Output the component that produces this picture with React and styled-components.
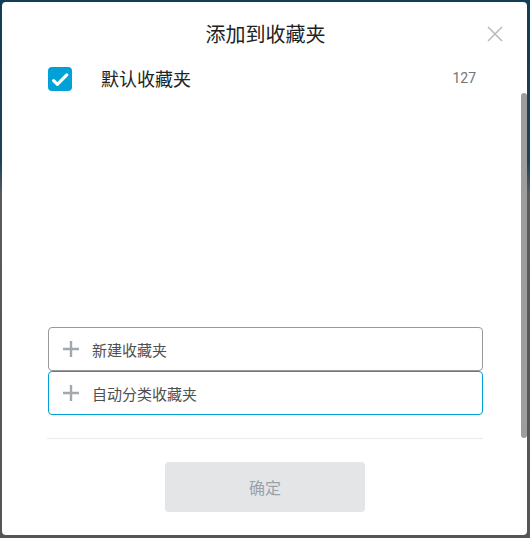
import React from "react";
import styled, { createGlobalStyle } from "styled-components";

const Global = createGlobalStyle`
  html, body { margin: 0; padding: 0; }
  body {
    font-family: "Noto Sans CJK SC", "Noto Sans", "Liberation Sans", sans-serif;
    background: #4f4f4f;
  }
  * { box-sizing: border-box; }
`;

const Backdrop = styled.div`
  width: 530px;
  height: 538px;
  padding: 2px 3px 3px 2px;
  background: linear-gradient(180deg, #123d56 0%, #1c4258 30%, #5a5a5a 36%, #555 100%);
  display: flex;
`;

const Modal = styled.div`
  position: relative;
  width: 525px;
  height: 533px;
  background: #fff;
  border-radius: 4px;
  display: flex;
  flex-direction: column;
  padding: 0 44px 22px 46px;
`;

const Header = styled.div`
  height: 55px;
  padding-top: 20px;
  text-align: center;
`;

const Title = styled.h2`
  margin: 0;
  font-size: 20px;
  line-height: 23px;
  font-weight: 400;
  color: #212121;
`;

const Close = styled.button`
  position: absolute;
  top: 24px;
  right: 24px;
  width: 16px;
  height: 16px;
  padding: 0;
  border: 0;
  background: none;
  display: flex;
`;

const Scrollbar = styled.div`
  position: absolute;
  right: 0;
  top: 91px;
  width: 6px;
  height: 345px;
  border-radius: 3px;
  background: #9d9d9d;
`;

const List = styled.div`
  height: 270px;
  padding-top: 10px;
  display: flex;
  flex-direction: column;
`;

const Row = styled.div`
  display: flex;
  align-items: center;
  height: 24px;
  padding-right: 7px;
`;

const Name = styled.span`
  flex: 1;
  margin-left: 29px;
  font-size: 18px;
  color: #222;
  line-height: 24px;
  position: relative;
  top: -1px;
`;

const Count = styled.span`
  font-family: "Roboto", "Liberation Sans", sans-serif;
  font-size: 14px;
  color: #6d757a;
  position: relative;
  top: -1px;
`;

const Actions = styled.div`
  display: flex;
  flex-direction: column;
`;

const ActionBox = styled.div`
  height: 44px;
  border: 1px solid ${(p) => (p.$active ? "#00a1d6" : "#999")};
  border-radius: 4px;
  display: flex;
  align-items: center;
  padding-left: 13px;
  gap: 12px;
  font-size: 15px;
  color: #505050;
`;

const Divider = styled.div`
  height: 1px;
  background: #e8eaed;
  margin: 23px 0 23px -1px;
`;

const Confirm = styled.button`
  align-self: center;
  margin-left: -1px;
  width: 200px;
  height: 50px;
  border: 0;
  border-radius: 4px;
  background: #e3e5e7;
  color: #99a2aa;
  font-family: inherit;
  font-size: 16px;
`;

const CheckIcon = () => (
  <svg width="24" height="24" viewBox="0 0 24 24">
    <rect width="24" height="24" rx="4" fill="#00a1d6" />
    <path
      d="M5.6 13.6 L9.4 17.3 L18.8 7.9"
      fill="none"
      stroke="#fff"
      strokeWidth="3.2"
      strokeLinecap="round"
      strokeLinejoin="round"
    />
  </svg>
);

const PlusIcon = () => (
  <svg width="18" height="18" viewBox="0 0 18 18">
    <path d="M9 1 V17 M1 9 H17" stroke="#a3a8ae" strokeWidth="2.4" />
  </svg>
);

const CloseIcon = () => (
  <svg width="16" height="16" viewBox="0 0 16 16">
    <path d="M1 1 L15 15 M15 1 L1 15" stroke="#b5bac0" strokeWidth="1.5" />
  </svg>
);

export default function App() {
  return (
    <>
      <Global />
      <Backdrop>
        <Modal>
          <Header>
            <Title>添加到收藏夹</Title>
          </Header>
          <Close aria-label="close">
            <CloseIcon />
          </Close>
          <List>
            <Row>
              <CheckIcon />
              <Name>默认收藏夹</Name>
              <Count>127</Count>
            </Row>
          </List>
          <Actions>
            <ActionBox>
              <PlusIcon />
              <span>新建收藏夹</span>
            </ActionBox>
            <ActionBox $active>
              <PlusIcon />
              <span>自动分类收藏夹</span>
            </ActionBox>
          </Actions>
          <Divider />
          <Confirm>确定</Confirm>
          <Scrollbar />
        </Modal>
      </Backdrop>
    </>
  );
}
